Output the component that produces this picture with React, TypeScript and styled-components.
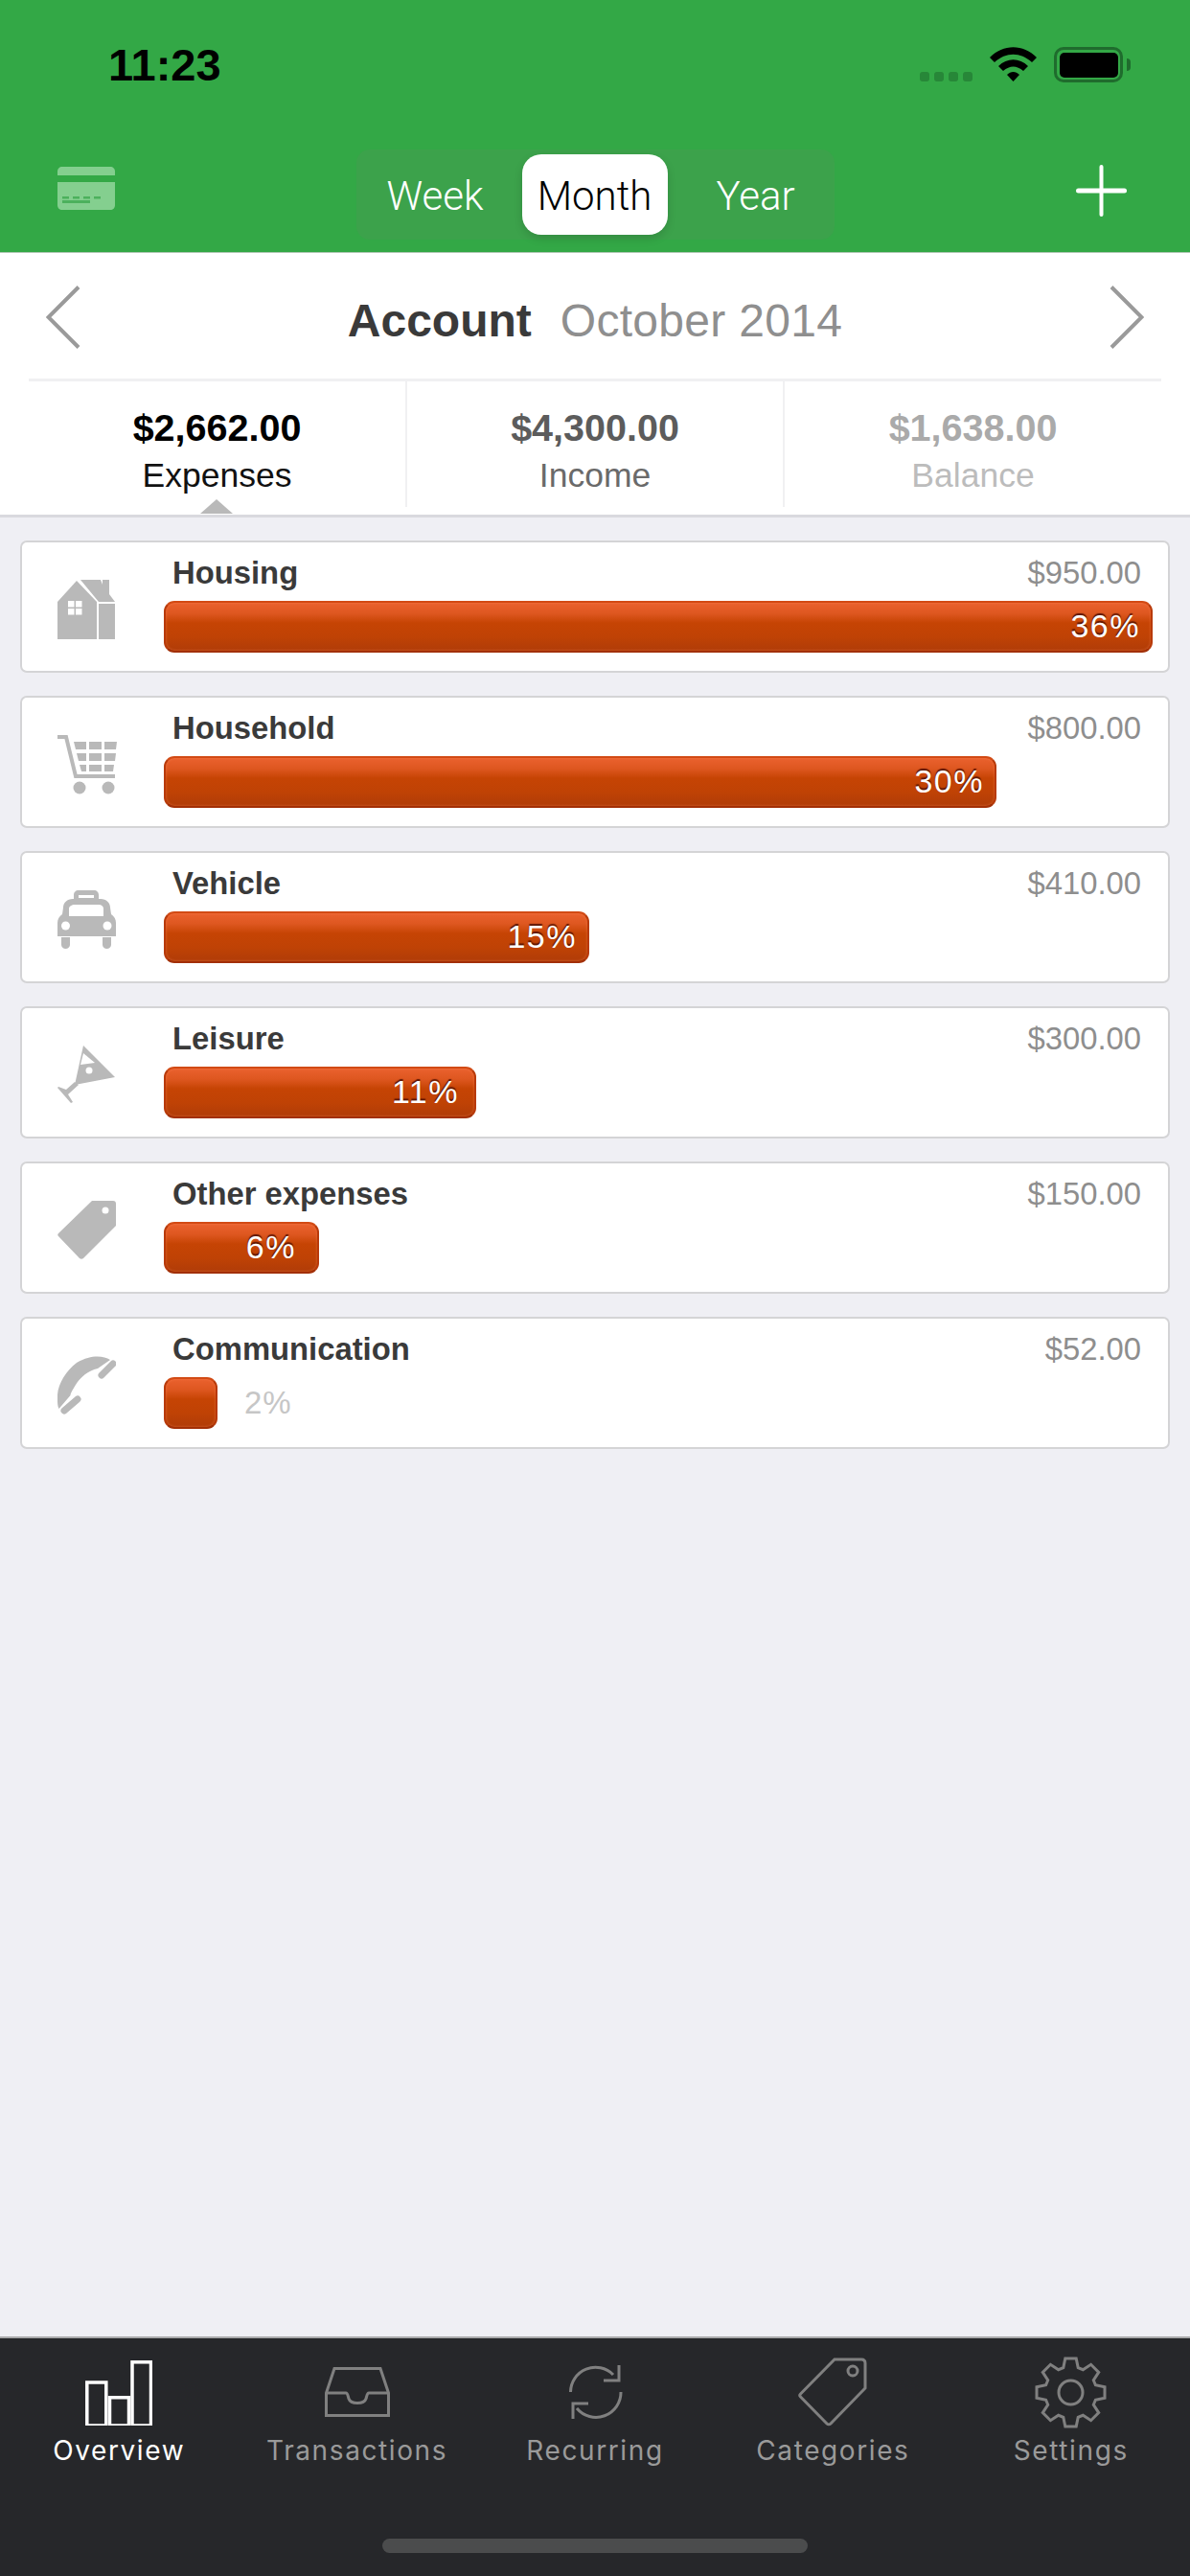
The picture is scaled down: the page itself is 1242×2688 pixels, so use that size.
import styled, { createGlobalStyle } from "styled-components";

const GlobalStyle = createGlobalStyle`
  html, body {
    margin: 0;
    padding: 0;
    background: #efeff4;
  }
`;

const Screen = styled.div`
  width: 1242px;
  height: 2688px;
  display: flex;
  flex-direction: column;
  overflow: hidden;
  font-family: "Liberation Sans", Arial, sans-serif;
  background: #efeff4;
`;

const Header = styled.header`
  height: 264px;
  flex: none;
  box-sizing: border-box;
  background: #33a846;
  border-bottom: 1px solid #b5c9b8;
`;

const StatusBar = styled.div`
  height: 156px;
  box-sizing: border-box;
  padding: 49px 70px 0 113px;
  display: flex;
  align-items: flex-start;
`;

const Clock = styled.div`
  font-size: 47px;
  font-weight: 700;
  line-height: 37px;
  color: #000;
  flex: 1;
`;

const SignalDots = styled.div`
  display: flex;
  gap: 5px;
  margin-top: 26px;
  margin-right: 18px;
`;

const SignalDot = styled.span`
  width: 10px;
  height: 10px;
  border-radius: 3px;
  background: #278738;
`;

const BatteryShell = styled.div`
  position: relative;
  width: 72px;
  height: 37px;
  margin-left: 18px;
  box-sizing: border-box;
  border: 3.5px solid #1f6c2d;
  border-radius: 10px;
  padding: 2.5px;
`;

const BatteryFill = styled.div`
  width: 100%;
  height: 100%;
  background: #000;
  border-radius: 5px;
`;

const BatteryNub = styled.span`
  position: absolute;
  right: -11px;
  top: 8.5px;
  width: 4px;
  height: 13px;
  background: #1f6c2d;
  border-radius: 0 4px 4px 0;
`;

const NavRow = styled.div`
  position: relative;
  display: flex;
  justify-content: center;
  height: 94px;
`;

const CardIconWrap = styled.div`
  position: absolute;
  left: 60px;
  top: 18px;
  display: flex;
`;

const PlusWrap = styled.div`
  position: absolute;
  right: 66px;
  top: 16px;
  display: flex;
`;

const Segmented = styled.div`
  width: 499px;
  height: 94px;
  box-sizing: border-box;
  padding: 5px 0 5px 0;
  background: #3ca24b;
  border-radius: 14px;
  display: grid;
  grid-template-columns: 173px 152px 174px;
`;

const Segment = styled.div<{ $active?: boolean }>`
  display: flex;
  align-items: center;
  justify-content: center;
  box-sizing: border-box;
  padding-top: 2px;
  font-family: Roboto, "Liberation Sans", sans-serif;
  font-weight: 300;
  font-size: 42px;
  color: ${(p) => (p.$active ? "#000" : "#fff")};
  background: ${(p) => (p.$active ? "#fff" : "transparent")};
  border-radius: 20px;
  box-shadow: ${(p) => (p.$active ? "0 4px 10px rgba(0, 0, 0, 0.14)" : "none")};

  &:first-child {
    padding-right: 8px;
  }

  &:last-child {
    padding-left: 10px;
  }
`;

const Summary = styled.section`
  flex: none;
  height: 276px;
  box-sizing: border-box;
  background: #fff;
  border-bottom: 3px solid #d9d9de;
  display: flex;
  flex-direction: column;
`;

const TitleRow = styled.div`
  height: 131px;
  flex: none;
  box-sizing: border-box;
  padding: 2px 48px 0;
  display: flex;
  align-items: center;
  justify-content: space-between;
`;

const Title = styled.div`
  display: flex;
  gap: 30px;
  font-size: 48px;
  line-height: 56px;
  margin-top: 8px;
`;

const AccountName = styled.span`
  font-weight: 700;
  color: #3a3a3a;
`;

const Period = styled.span`
  color: #8f8f8f;
  letter-spacing: 0.3px;
`;

const Stats = styled.div`
  flex: 1;
  margin: 0 30px;
  border-top: 3px solid #f0f0f2;
  display: grid;
  grid-template-columns: 395px 394px 393px;
`;

const Stat = styled.div<{ $last?: boolean }>`
  position: relative;
  height: 131px;
  display: flex;
  flex-direction: column;
  align-items: center;
  border-right: ${(p) => (p.$last ? "none" : "2px solid #f0f0f2")};
`;

const StatValue = styled.div<{ $color: string }>`
  margin-top: 26px;
  font-size: 39.5px;
  line-height: 44px;
  font-weight: 700;
  color: ${(p) => p.$color};
`;

const StatLabel = styled.div<{ $color: string }>`
  margin-top: 8px;
  font-size: 35.5px;
  line-height: 40px;
  color: ${(p) => p.$color};
`;

const Caret = styled.span`
  position: absolute;
  left: 179px;
  bottom: -7px;
  width: 0;
  height: 0;
  border-left: 17px solid transparent;
  border-right: 17px solid transparent;
  border-bottom: 15px solid #b9b9b9;
`;

const List = styled.main`
  flex: 1;
  padding: 24px 21px 0;
  display: flex;
  flex-direction: column;
  gap: 24px;
`;

const Card = styled.article`
  height: 138px;
  box-sizing: border-box;
  background: #fff;
  border: 2px solid #d4d4d6;
  border-radius: 7px;
  display: flex;
`;

const CardIcon = styled.div`
  width: 148px;
  flex: none;
  box-sizing: border-box;
  padding: 39px 0 0 37px;
`;

const CardBody = styled.div`
  flex: 1;
  padding-right: 16px;
`;

const CardHead = styled.div`
  display: flex;
  justify-content: space-between;
  align-items: baseline;
  height: 61px;
  box-sizing: border-box;
  padding: 13px 12px 0 9px;
  font-size: 32.8px;
  line-height: 38px;
`;

const CardName = styled.span`
  font-weight: 700;
  color: #3a3a3a;
`;

const CardAmount = styled.span`
  color: #8e8e8e;
`;

const BarRow = styled.div`
  display: flex;
  align-items: center;
`;

const Bar = styled.div<{ $pad: number }>`
  height: 54px;
  box-sizing: border-box;
  border: 2px solid #b83a0a;
  border-top-color: #d24a14;
  border-bottom-color: #a22f06;
  border-radius: 11px;
  padding-right: ${(p) => p.$pad}px;
  padding-bottom: 2px;
  background: linear-gradient(#ea612e 0%, #de5720 22%, #c64404 42%, #bf4205 72%, #b03c08 100%);
  box-shadow: inset 0 0 3px rgba(255, 140, 90, 0.5);
  display: flex;
  align-items: center;
  justify-content: flex-end;
`;

const BarLabel = styled.span`
  font-size: 34px;
  letter-spacing: 1.5px;
  color: #fff;
  text-shadow: 0 -2px 1px rgba(80, 15, 0, 0.9);
`;

const OutsideLabel = styled.span`
  margin-left: 28px;
  font-size: 33px;
  letter-spacing: 1px;
  color: #c6c6c6;
`;

const TabBar = styled.nav`
  flex: none;
  height: 250px;
  box-sizing: border-box;
  background: #26272a;
  border-top: 2px solid #a9a9ab;
  position: relative;
  display: grid;
  grid-template-columns: repeat(5, 1fr);
  align-items: start;
`;

const Tab = styled.div<{ $active?: boolean }>`
  display: flex;
  flex-direction: column;
  align-items: center;
  padding-top: 17px;
  font-family: Inter, "Noto Sans", sans-serif;
  font-size: 28px;
  letter-spacing: 1.6px;
  line-height: 34px;
  color: ${(p) => (p.$active ? "#fff" : "#9a9a9a")};
`;

const TabIcon = styled.div`
  height: 78px;
  margin-bottom: 5px;
  display: flex;
  align-items: center;
  justify-content: center;
`;

const HomeIndicator = styled.span`
  position: absolute;
  left: 399px;
  top: 209px;
  width: 444px;
  height: 15px;
  border-radius: 8px;
  background: #4b4c4d;
`;

const GREY = "#b9b9b9";

const HouseIcon = () => (
  <svg width="61" height="62" viewBox="0 0 61 62">
    <path fill={GREY} d="M0 62V23L20 1l21 22v39z" />
    <path fill={GREY} d="M24 0h21l2 5V0h7v15l6 8H43z" />
    <path fill={GREY} d="M43 25h17v37H43z" />
    <path fill="#fff" d="M11 22h6.5v6.5H11zM19 22h6.5v6.5H19zM11 30h6.5v6.5H11zM19 30h6.5v6.5H19z" />
  </svg>
);

const CartIcon = () => (
  <svg width="62" height="62" viewBox="0 0 62 62">
    <path fill="none" stroke={GREY} strokeWidth="4" d="M0 2h9l10 41h41" />
    <path
      fill={GREY}
      d="M17 7h13v8H19zM33 7h13v8H33zM49 7h13l-1 8H49zM20 19h10v8H22zM33 19h13v8H33zM49 19h12l-1 8H49zM23 31h7v7h-5zM33 31h13v7H33zM49 31h10l-1 7h-9z"
    />
    <circle cx="23" cy="55" r="6.5" fill={GREY} />
    <circle cx="53" cy="55" r="6.5" fill={GREY} />
  </svg>
);

const TaxiIcon = () => (
  <svg width="61" height="62" viewBox="0 0 61 62">
    <path
      fill={GREY}
      d="M17 9V5c0-3 2-5 5-5h16c3 0 5 2 5 5v4h2c6 0 10 4 10 9l1 7c3 2 5 5 5 9v14H0V34c0-4 2-7 5-9l1-7c0-5 4-9 10-9z"
    />
    <path fill="#fff" d="M22 5h16v3H22zM12 27v-8c0-2 3-4 6-4h25c3 0 5 2 5 4v8z" />
    <circle cx="8.5" cy="37" r="4.5" fill="#fff" />
    <circle cx="52" cy="37" r="4.5" fill="#fff" />
    <path fill={GREY} d="M4 49h9v8c0 2-2 4-4.500 4S4 59 4 57zM47 49h9v8c0 2-2 4-4.500 4S47 59 47 57z" />
  </svg>
);

const MartiniIcon = () => (
  <svg width="60" height="60" viewBox="0 0 60 60">
    <path fill={GREY} d="M27 0l33 33-42 8z" />
    <path fill={GREY} d="M18 38l4 3-11 10 5 8-2 1L0 44l1-1 8 3z" />
    <path fill="#fff" d="M27 8l12 10-15 2z" />
    <circle cx="33" cy="26" r="3.500" fill="#fff" />
  </svg>
);

const TagIcon = () => (
  <svg width="61" height="62" viewBox="0 0 61 62">
    <path fill={GREY} d="M36 0h22c2 0 3 1 3 3v23L27 60c-1 1-3 1-4 0L1 37c-1-1-1-2 0-3z" />
    <circle cx="50" cy="10" r="3.500" fill="#fff" />
  </svg>
);

const PhoneIcon = () => (
  <svg width="61" height="62" viewBox="0 0 61 62">
    <path
      fill={GREY}
      d="M55 4C48 0 36-2 20 7 8 16-1 32 0 44c0 5 0 8 1.500 11L13.500 41c0-2 3-7 5.500-11 5-8 13-15 23-17z"
    />
    <path fill="none" stroke={GREY} strokeWidth="7" strokeLinecap="round" d="M46 20l12-12M7 57l14-12" />
  </svg>
);

const rows = [
  { name: "Housing", amount: "$950.00", percent: "36%", width: 1032, pad: 11, icon: <HouseIcon /> },
  { name: "Household", amount: "$800.00", percent: "30%", width: 869, pad: 11, icon: <CartIcon /> },
  { name: "Vehicle", amount: "$410.00", percent: "15%", width: 444, pad: 11, icon: <TaxiIcon /> },
  { name: "Leisure", amount: "$300.00", percent: "11%", width: 326, pad: 16, icon: <MartiniIcon /> },
  { name: "Other expenses", amount: "$150.00", percent: "6%", width: 162, pad: 22, icon: <TagIcon /> },
  { name: "Communication", amount: "$52.00", percent: "2%", width: 56, pad: 0, icon: <PhoneIcon />, outside: true },
];

const TAB = "#808080";

const gearPath = () => {
  const teeth = 8;
  const c = 37.5;
  const pts: string[] = [];
  for (let i = 0; i < teeth; i++) {
    const a = (i / teeth) * Math.PI * 2 - Math.PI / 2;
    for (const [r, d] of [
      [27, -0.29],
      [36, -0.16],
      [36, 0.16],
      [27, 0.29],
    ]) {
      pts.push(`${(c + r * Math.cos(a + d)).toFixed(1)} ${(c + r * Math.sin(a + d)).toFixed(1)}`);
    }
  }
  return `M${pts.join("L")}Z`;
};

const OverviewIcon = () => (
  <svg width="70" height="70" viewBox="0 -2 70 70" fill="none" stroke="#fff" strokeWidth="3.500">
    <rect x="1.800" y="23" width="20" height="45" />
    <rect x="25.500" y="38.750" width="20" height="29.250" />
    <rect x="49" y="1.800" width="19.500" height="66.200" />
  </svg>
);

const TrayIcon = () => (
  <svg width="68" height="52" viewBox="0 0 68 52" fill="none" stroke={TAB} strokeWidth="3">
    <path d="M1.500 27L10 1.500h48L66.500 27v23.500h-65z" />
    <path d="M1.500 27H22c2 0 2 3 3 6 2 6 16 6 18 0 1-3 1-6 3-6h20.500" />
  </svg>
);

const RecurringIcon = () => (
  <svg width="60" height="62" viewBox="0 0 60 62" fill="none" stroke={TAB} strokeWidth="3">
    <path d="M4.500 31A26 26 0 0 1 49 13" />
    <path d="M39 19h16V3" />
    <path d="M57 31A26 26 0 0 1 11 48" />
    <path d="M23 43H7v16" />
  </svg>
);

const TagOutlineIcon = () => (
  <svg width="72" height="72" viewBox="0 0 72 72" fill="none" stroke={TAB} strokeWidth="3">
    <path d="M38 2h28c2.500 0 4 1.500 4 4v26L34 69c-1 1-3 1-4 0L2.500 41c-1-1-1-2 0-3z" />
    <circle cx="57" cy="14" r="5" />
  </svg>
);

const GearIcon = () => (
  <svg width="75" height="75" viewBox="0 0 75 75" fill="none" stroke={TAB} strokeWidth="3">
    <path d={gearPath()} />
    <circle cx="37.500" cy="37.500" r="12.500" />
  </svg>
);

const tabs = [
  { label: "Overview", icon: <OverviewIcon />, active: true },
  { label: "Transactions", icon: <TrayIcon /> },
  { label: "Recurring", icon: <RecurringIcon /> },
  { label: "Categories", icon: <TagOutlineIcon /> },
  { label: "Settings", icon: <GearIcon /> },
];

const stats = [
  { value: "$2,662.00", label: "Expenses", valueColor: "#000", labelColor: "#111" },
  { value: "$4,300.00", label: "Income", valueColor: "#5c5c5c", labelColor: "#6a6a6a" },
  { value: "$1,638.00", label: "Balance", valueColor: "#aaa", labelColor: "#bcbcbc" },
];

export default function App() {
  return (
    <Screen>
      <GlobalStyle />
      <Header>
        <StatusBar>
          <Clock>11:23</Clock>
          <SignalDots>
            <SignalDot />
            <SignalDot />
            <SignalDot />
            <SignalDot />
          </SignalDots>
          <svg width="49" height="36" viewBox="0 0 49 36">
            <path d="M0 11C14-3.500 35-3.500 49 11l-5 5C32 5 17 5 5 16z" />
            <path d="M9 20c9-9 22-9 31 0l-5 5c-7-6-14-6-21 0z" />
            <path d="M18 29c4-4 9-4 13 0l-6.500 7z" />
          </svg>
          <BatteryShell>
            <BatteryFill />
            <BatteryNub />
          </BatteryShell>
        </StatusBar>
        <NavRow>
          <CardIconWrap>
            <svg width="60" height="46" viewBox="0 0 60 46">
              <path fill="#84cf8f" d="M5 0h50c3 0 5 2 5 5v4H0V5c0-3 2-5 5-5z" />
              <path fill="#84cf8f" d="M0 16h60v24c0 3-2 5-5 5H5c-3 0-5-2-5-5z" />
              <path fill="#4cb15d" d="M5 31h7v2.500H5zM16 31h7v2.500h-7zM27 31h7v2.500h-7zM38 31h7v2.500h-7zM5 35h29v3H5z" />
            </svg>
          </CardIconWrap>
          <Segmented>
            <Segment>Week</Segment>
            <Segment $active>Month</Segment>
            <Segment>Year</Segment>
          </Segmented>
          <PlusWrap>
            <svg width="53" height="54" viewBox="0 0 53 54" stroke="#fff" strokeLinecap="round">
              <path strokeWidth="4" d="M26.500 2v50" />
              <path strokeWidth="5" d="M2.500 27h48" />
            </svg>
          </PlusWrap>
        </NavRow>
      </Header>

      <Summary>
        <TitleRow>
          <svg width="36" height="66" viewBox="0 0 36 66" fill="none" stroke="#9a9a9a" strokeWidth="4">
            <path d="M34 1.500L2.500 33 34 64.500" />
          </svg>
          <Title>
            <AccountName>Account</AccountName>
            <Period>October 2014</Period>
          </Title>
          <svg width="36" height="66" viewBox="0 0 36 66" fill="none" stroke="#9a9a9a" strokeWidth="4">
            <path d="M2 1.500L33.500 33 2 64.500" />
          </svg>
        </TitleRow>
        <Stats>
          {stats.map((s, i) => (
            <Stat key={s.label} $last={i === stats.length - 1}>
              <StatValue $color={s.valueColor}>{s.value}</StatValue>
              <StatLabel $color={s.labelColor}>{s.label}</StatLabel>
              {i === 0 && <Caret />}
            </Stat>
          ))}
        </Stats>
      </Summary>

      <List>
        {rows.map((r) => (
          <Card key={r.name}>
            <CardIcon>{r.icon}</CardIcon>
            <CardBody>
              <CardHead>
                <CardName>{r.name}</CardName>
                <CardAmount>{r.amount}</CardAmount>
              </CardHead>
              <BarRow>
                <Bar $pad={r.pad} style={{ width: r.width }}>
                  {!r.outside && <BarLabel>{r.percent}</BarLabel>}
                </Bar>
                {r.outside && <OutsideLabel>{r.percent}</OutsideLabel>}
              </BarRow>
            </CardBody>
          </Card>
        ))}
      </List>

      <TabBar>
        {tabs.map((t) => (
          <Tab key={t.label} $active={t.active}>
            <TabIcon>{t.icon}</TabIcon>
            {t.label}
          </Tab>
        ))}
        <HomeIndicator />
      </TabBar>
    </Screen>
  );
}
